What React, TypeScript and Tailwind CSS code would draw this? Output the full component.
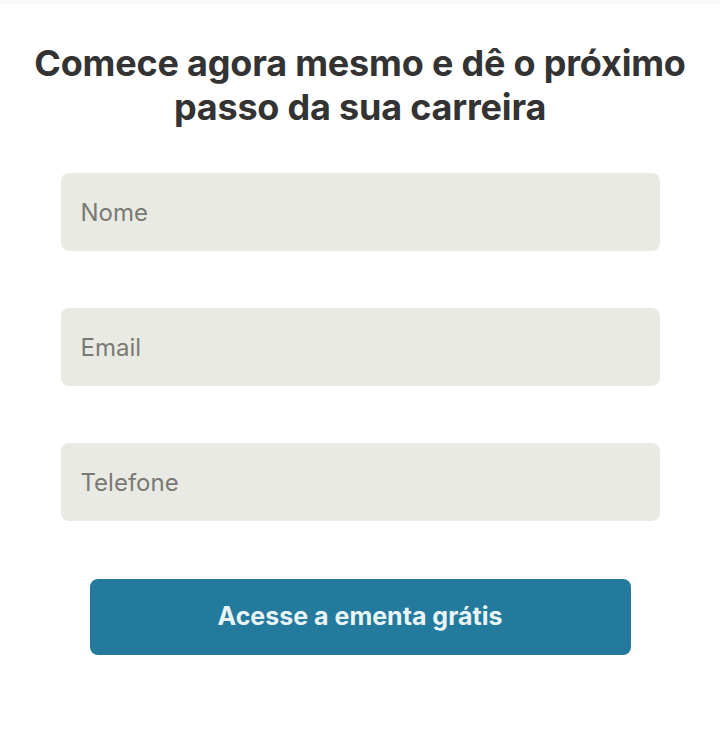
import React from 'react';

const fields = ['Nome', 'Email', 'Telefone'];

const App = () => {
    return (
        <div className="min-h-[748px] w-[720px] bg-white font-['Inter',sans-serif]">
            <div className="h-[4px] bg-[#fafafa]" />
            <div className="flex flex-col items-center pt-[37px]">
                <h1 className="text-center text-[36px] leading-[44px] font-bold text-[#333333] tracking-[-0.2px]">
                    Comece agora mesmo e dê o próximo
                    <br />
                    passo da sua carreira
                </h1>
                <form className="mt-[44px] flex w-[599px] flex-col gap-[57px]" onSubmit={(e) => e.preventDefault()}>
                    {fields.map((f) => (
                        <input
                            key={f}
                            type="text"
                            placeholder={f}
                            className="h-[78px] w-full rounded-lg bg-[#eaeae5] px-[20px] text-[24px] text-[#333] placeholder:text-[#7a7a74] outline-none"
                        />
                    ))}
                </form>
                <button
                    type="button"
                    className="mt-[58px] h-[76px] w-[541px] rounded-lg bg-[#237a9c] text-[25px] font-bold text-[#e8f4f6]"
                >
                    Acesse a ementa grátis
                </button>
            </div>
        </div>
    );
};

export default App;
